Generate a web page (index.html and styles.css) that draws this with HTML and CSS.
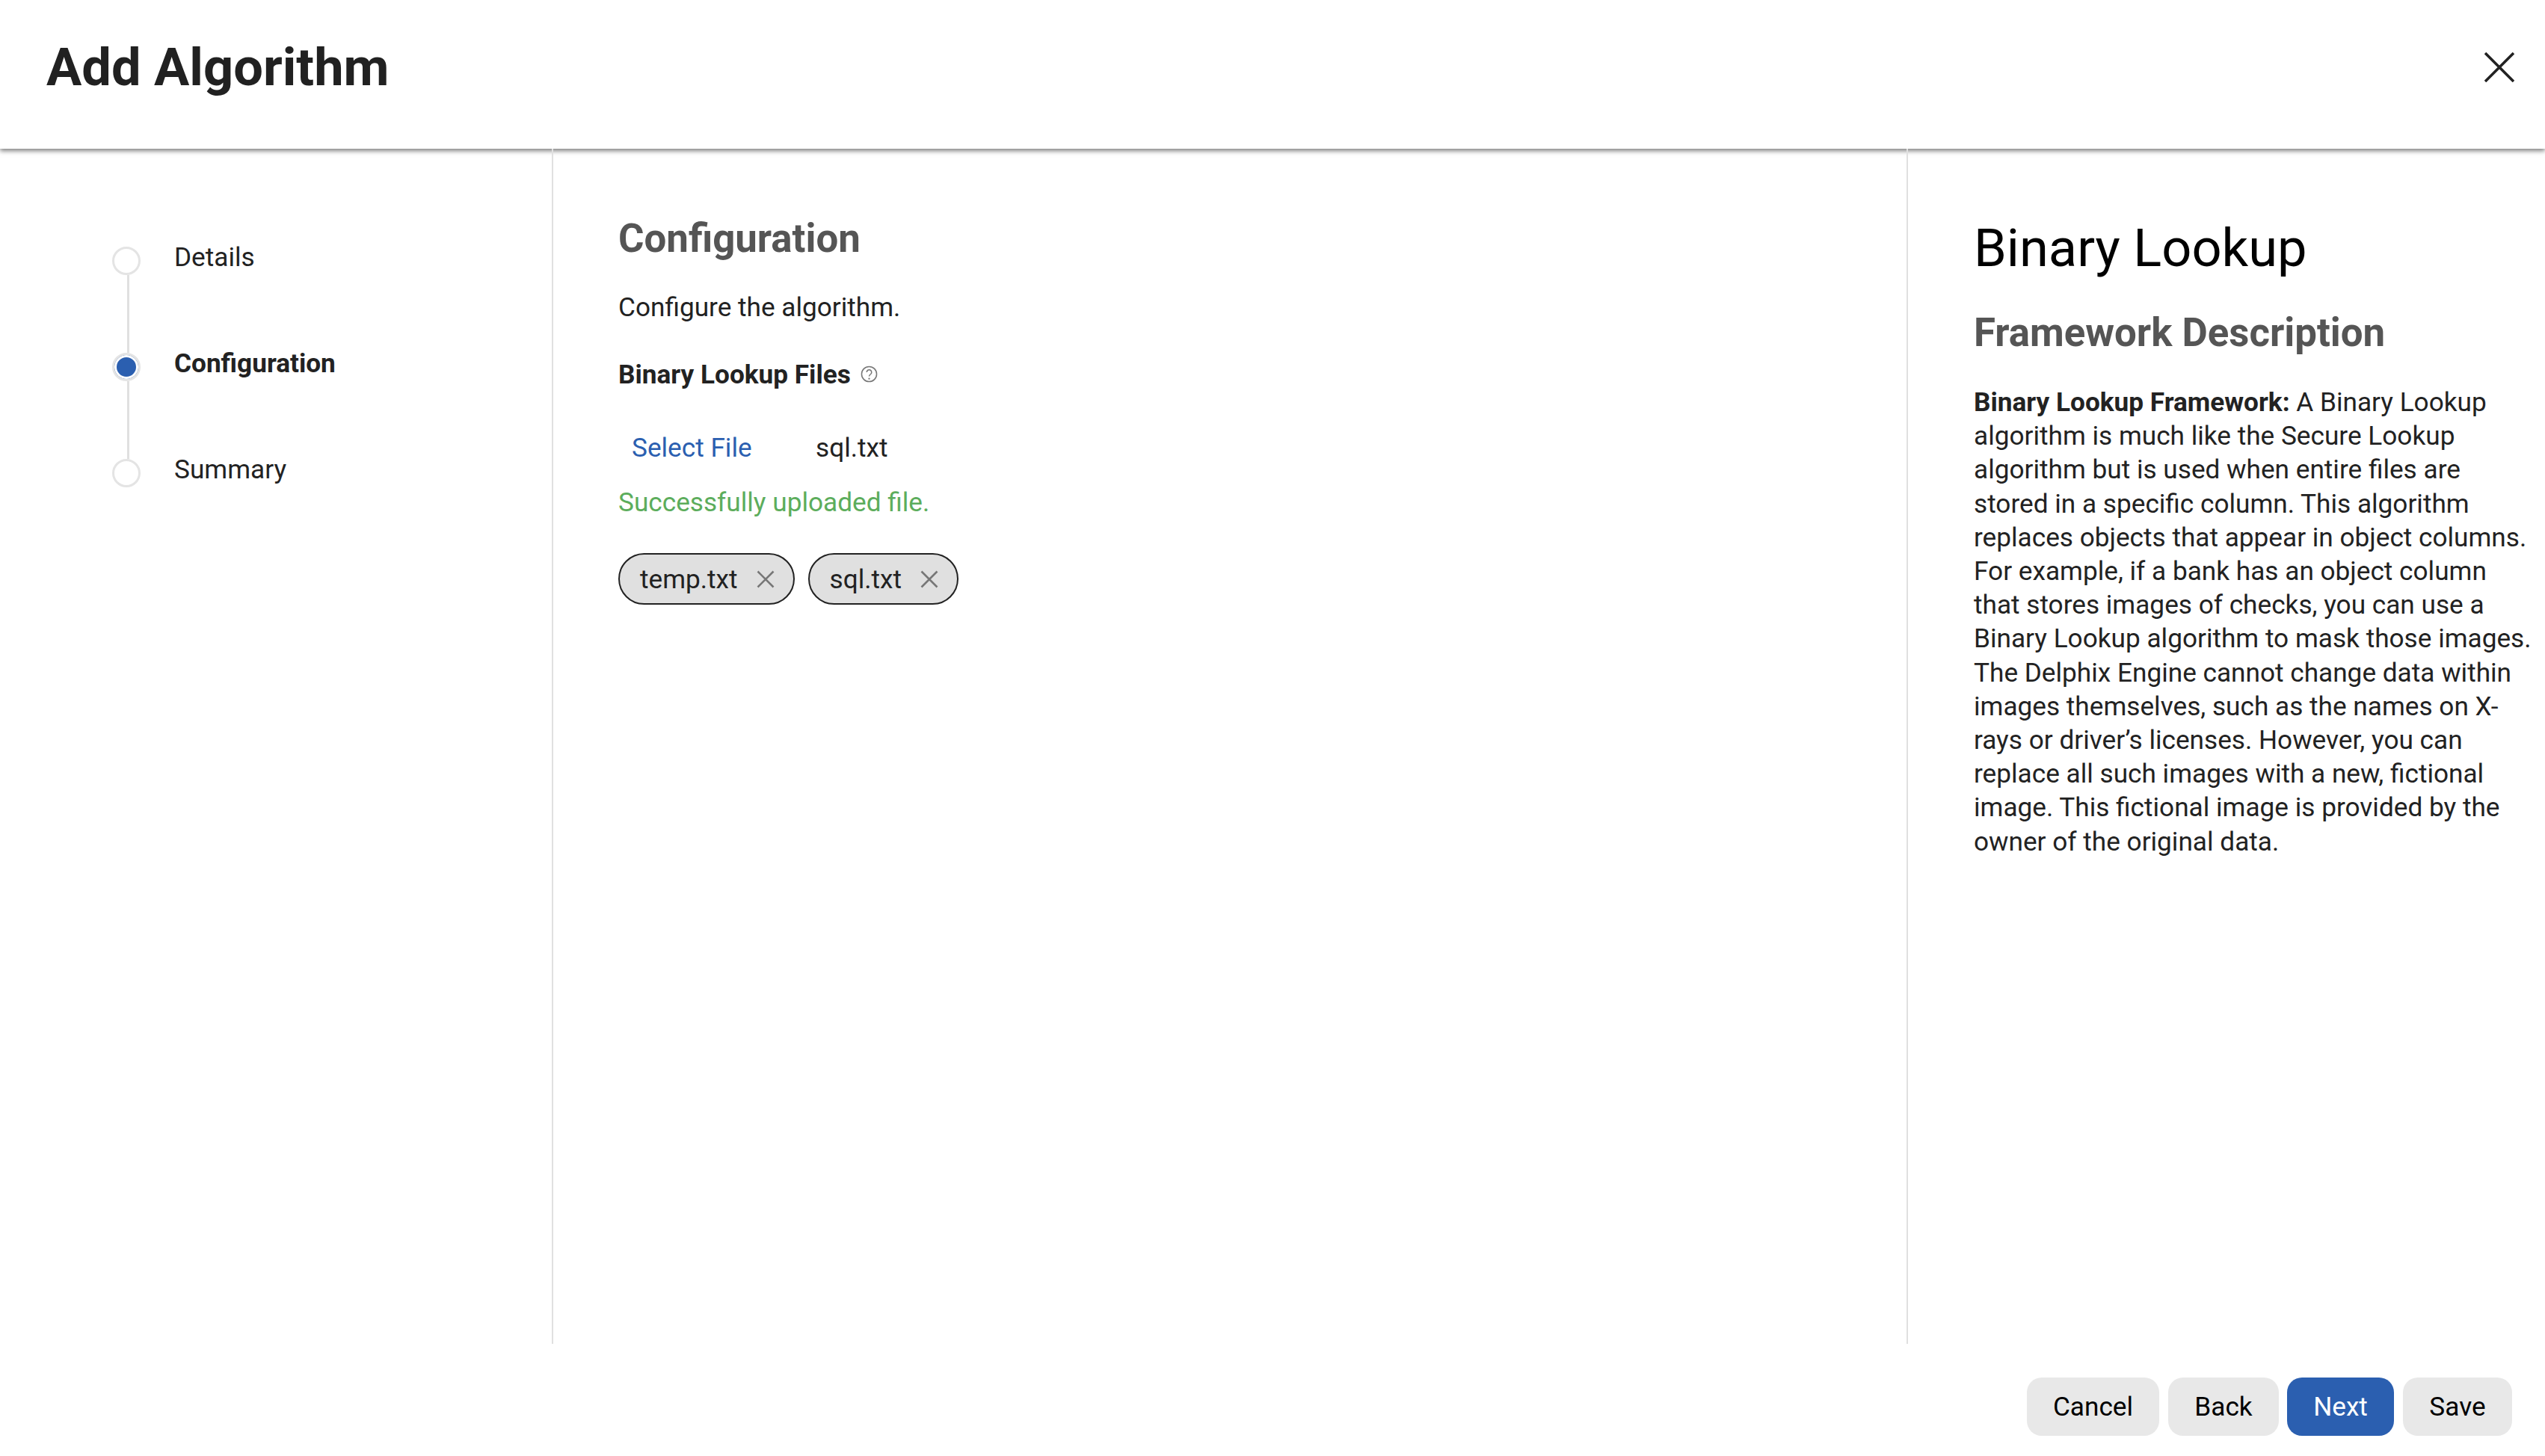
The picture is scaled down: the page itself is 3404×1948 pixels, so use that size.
FILE: index.html
```html
<!DOCTYPE html>
<html lang="en">
<head>
<meta charset="utf-8">
<title>Add Algorithm</title>
<link rel="stylesheet" href="styles.css">
</head>
<body>
<div class="dialog">
  <header class="header">
    <h1 class="title">Add Algorithm</h1>
    <svg class="close" viewBox="0 0 40 40" aria-label="Close"><path d="M1 1L39 39M39 1L1 39"/></svg>
  </header>
  <main class="content">
    <nav class="steps">
      <div class="step"><span class="dot"></span><span class="step-label">Details</span></div>
      <div class="step step-active"><span class="dot"></span><span class="step-label">Configuration</span></div>
      <div class="step"><span class="dot"></span><span class="step-label">Summary</span></div>
    </nav>
    <section class="config">
      <h2 class="subhead">Configuration</h2>
      <p class="intro">Configure the algorithm.</p>
      <div class="field-label"><strong>Binary Lookup Files</strong>
        <svg class="help" viewBox="0 0 24 24"><circle cx="12" cy="12" r="10.5"/><path d="M8.6 9.4a3.4 3.4 0 1 1 5.6 2.6c-1.3 1-2.2 1.7-2.2 3.2"/><circle class="help-dot" cx="12" cy="18.4" r="1.2"/></svg>
      </div>
      <div class="file-row"><span class="file-link">Select File</span><span class="file-name">sql.txt</span></div>
      <p class="success">Successfully uploaded file.</p>
      <div class="chips">
        <span class="chip">temp.txt<svg class="chip-x" viewBox="0 0 24 24"><path d="M1.5 1.5L22.5 22.5M22.5 1.5L1.5 22.5"/></svg></span>
        <span class="chip">sql.txt<svg class="chip-x" viewBox="0 0 24 24"><path d="M1.5 1.5L22.5 22.5M22.5 1.5L1.5 22.5"/></svg></span>
      </div>
    </section>
    <aside class="info">
      <h2 class="info-title">Binary Lookup</h2>
      <h3 class="subhead info-sub">Framework Description</h3>
      <p class="info-text"><strong>Binary Lookup Framework:</strong> A Binary Lookup algorithm is much like the Secure Lookup algorithm but is used when entire files are stored in a specific column. This algorithm replaces objects that appear in object columns. For example, if a bank has an object column that stores images of checks, you can use a Binary Lookup algorithm to mask those images. The Delphix Engine cannot change data within images themselves, such as the names on X-rays or driver’s licenses. However, you can replace all such images with a new, fictional image. This fictional image is provided by the owner of the original data.</p>
    </aside>
  </main>
  <footer class="footer">
    <button class="btn btn-cancel">Cancel</button>
    <button class="btn btn-back">Back</button>
    <button class="btn btn-primary btn-next">Next</button>
    <button class="btn btn-save">Save</button>
  </footer>
</div>
</body>
</html>
```
FILE: styles.css
```css
* { box-sizing: border-box; }
html, body { margin: 0; height: 100%; background: #fff; }
body { font-family: Roboto, "Liberation Sans", sans-serif; font-size: 35.2px; color: #222; }
.dialog { display: flex; flex-direction: column; height: 100vh; }
.header { height: 199px; flex: none; display: flex; align-items: center; justify-content: space-between; padding: 0 41px 19px 62px; box-shadow: 0 3px 6px rgba(0,0,0,.5); }
.title { margin: 0; font-size: 70.4px; font-weight: 700; color: #212121; line-height: 1.2; }
.close { width: 40px; height: 40px; fill: none; stroke: #222; stroke-width: 3.6; }
.content { flex: 1; display: flex; min-height: 0; }
.steps { width: 740px; flex: none; border-right: 2px solid #e0e0e0; padding: 114px 0 0 150px; }
.step { position: relative; display: flex; height: 142px; gap: 45px; }
.step:not(:last-child)::after { content: ""; position: absolute; left: 20px; top: 55px; width: 2.5px; height: 104px; background: #e0e0e0; }
.dot { width: 38px; height: 38px; flex: none; border-radius: 50%; border: 3px solid #e4e4e4; background: #fff; margin-top: 17px; }
.step-active .dot { background: #2b5fb0; box-shadow: inset 0 0 0 3px #fff; }
.step-label { line-height: 42px; margin-top: 10px; }
.step-active .step-label { font-weight: 700; }
.config { width: 1812px; flex: none; border-right: 2px solid #e0e0e0; padding: 86px 0 0 87px; }
.subhead { margin: 0; font-size: 52.8px; font-weight: 700; color: #555; line-height: 68px; }
.intro { margin: 37px 0 0; line-height: 42px; }
.field-label { margin-top: 48px; line-height: 42px; display: flex; align-items: center; gap: 13px; }
.help { width: 23px; height: 23px; fill: none; stroke: #777; stroke-width: 1.6; margin-top: -2px; }
.help-dot { fill: #777; stroke: none; }
.file-row { margin-top: 56px; display: flex; line-height: 42px; padding-left: 18px; }
.file-link { color: #2b5fb0; width: 246px; }
.success { margin: 31px 0 0; line-height: 42px; color: #5cad5c; }
.chips { display: flex; gap: 18px; margin-top: 47px; }
.chip { height: 69px; display: flex; align-items: center; gap: 25px; padding: 0 25px 0 27px; border: 2.5px solid #222; border-radius: 35px; background: #e0e0e0; }
.chip-x { width: 24px; height: 24px; fill: none; stroke: #777; stroke-width: 2.6; }
.info { flex: 1; padding: 90px 14px 0 88px; min-width: 0; }
.info-title { margin: 0; font-size: 70.4px; font-weight: 400; color: #000; line-height: 86px; }
.info-sub { margin-top: 36px; }
.info-text { margin: 37px 0 0; line-height: 45.2px; }
.footer { height: 150px; flex: none; display: flex; justify-content: flex-end; gap: 12px; padding: 45px 44px 0 0; }
.btn { height: 78px; border: 0; border-radius: 20px; background: #e8e8e8; color: #000; font: 400 35.2px Roboto, sans-serif; padding: 0; }
.btn-primary { background: #2b5fb0; color: #fff; }
.btn-cancel { width: 177px; }
.btn-back { width: 148px; margin-right: -1px; }
.btn-next { width: 143px; }
.btn-save { width: 146px; }
```
